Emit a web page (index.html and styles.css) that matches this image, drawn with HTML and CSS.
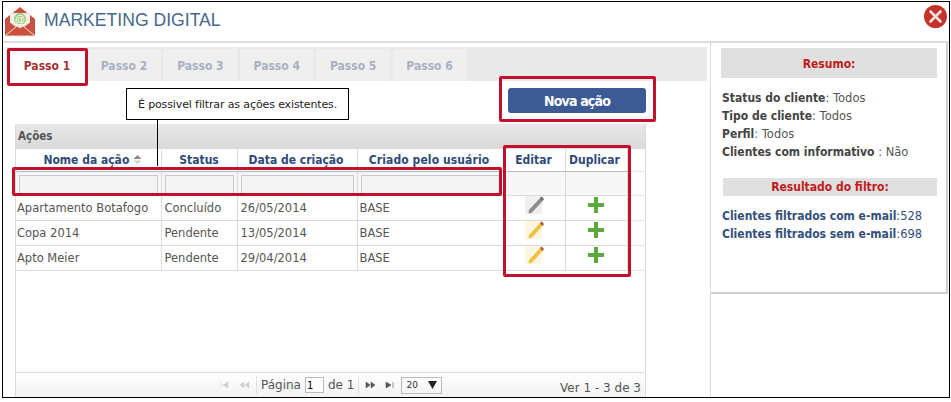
FILE: index.html
```html
<!DOCTYPE html>
<html lang="pt">
<head>
<meta charset="utf-8">
<title>Marketing Digital</title>
<link rel="stylesheet" href="styles.css">
</head>
<body>
<div class="modal">
  <header class="head">
    <svg class="logo" width="32" height="31" viewBox="0 0 32 31">
      <path d="M1 13 16 1l15 12v17H1z" fill="#c9513f"/>
      <path d="M6 17V7h20v10l-10 7z" fill="#f4efe4"/>
      <path d="M1 13 16 24l15-11v3L16 26 1 16z" fill="#c9513f"/>
      <path d="M1 30 13 20l3 2 3-2 12 10z" fill="#c9513f" stroke="#f2ddd6" stroke-width="1"/>
      <circle cx="16" cy="13" r="6" fill="#9ccc7a"/>
      <text x="16" y="16.5" class="logo-at">@</text>
    </svg>
    <h1 class="title">MARKETING DIGITAL</h1>
    <button class="close" aria-label="Fechar">
      <svg width="23" height="23" viewBox="0 0 23 23"><circle cx="11.5" cy="11.5" r="11.5" fill="#c5322b"/><path d="M6.5 6.500l10 10M16.500 6.500l-10 10" stroke="#f6e3e0" stroke-width="2.600" stroke-linecap="round"/></svg>
    </button>
  </header>
  <div class="body">
    <main class="main">
      <nav class="tabs">
        <a class="tab tab-on">Passo 1</a>
        <a class="tab">Passo 2</a>
        <a class="tab">Passo 3</a>
        <a class="tab">Passo 4</a>
        <a class="tab">Passo 5</a>
        <a class="tab">Passo 6</a>
      </nav>
      <div class="tools"><button class="new">Nova ação</button></div>
      <section class="grid">
        <div class="caption">Ações</div>
        <table class="tbl">
          <colgroup><col class="c1"><col class="c2"><col class="c3"><col class="c4"><col class="c5"><col class="c6"><col></colgroup>
          <thead>
            <tr class="hr">
              <th>Nome da ação <svg class="sort" width="9" height="9" viewBox="0 0 9 9"><path d="M4.500 0 8.500 4H.5z" fill="#8a8a8a"/><path d="M4.500 9 8.500 5.500H.5z" fill="#cfcfcf"/></svg></th>
              <th>Status</th><th>Data de criação</th><th>Criado pelo usuário</th><th>Editar</th><th>Duplicar</th><th class="blank"></th>
            </tr>
            <tr class="fr">
              <td><input class="f"></td><td><input class="f"></td><td><input class="f"></td><td><input class="f"></td><td></td><td></td><td class="blank"></td>
            </tr>
          </thead>
          <tbody>
            <tr><td>Apartamento Botafogo</td><td>Concluído</td><td>26/05/2014</td><td>BASE</td>
              <td class="ic"><svg width="22" height="22" viewBox="0 0 22 22"><rect x="1" y="2" width="17" height="18" fill="#efefef"/><path d="M5 16l11-12 3 2.500L8 18.500l-3.500 1z" fill="#8d8d8d"/><path d="M16 4l1.500-1.500 2.500 2.500L18.500 7z" fill="#666"/></svg></td>
              <td class="ic"><svg width="18" height="18" viewBox="0 0 18 18"><path d="M7 1h4v6h6v4h-6v6H7v-6H1V7h6z" fill="#5fa83c"/></svg></td><td class="blank"></td></tr>
            <tr><td>Copa 2014</td><td>Pendente</td><td>13/05/2014</td><td>BASE</td>
              <td class="ic"><svg width="22" height="22" viewBox="0 0 22 22"><rect x="1" y="2" width="17" height="18" fill="#fbf5e2"/><path d="M5 16l11-12 3 2.500L8 18.500l-3.500 1z" fill="#ecc23f"/><path d="M16 4l1.500-1.500 2.500 2.500L18.500 7z" fill="#b5493a"/></svg></td>
              <td class="ic"><svg width="18" height="18" viewBox="0 0 18 18"><path d="M7 1h4v6h6v4h-6v6H7v-6H1V7h6z" fill="#5fa83c"/></svg></td><td class="blank"></td></tr>
            <tr><td>Apto Meier</td><td>Pendente</td><td>29/04/2014</td><td>BASE</td>
              <td class="ic"><svg width="22" height="22" viewBox="0 0 22 22"><rect x="1" y="2" width="17" height="18" fill="#fbf5e2"/><path d="M5 16l11-12 3 2.500L8 18.500l-3.500 1z" fill="#ecc23f"/><path d="M16 4l1.500-1.500 2.500 2.500L18.500 7z" fill="#b5493a"/></svg></td>
              <td class="ic"><svg width="18" height="18" viewBox="0 0 18 18"><path d="M7 1h4v6h6v4h-6v6H7v-6H1V7h6z" fill="#5fa83c"/></svg></td><td class="blank"></td></tr>
          </tbody>
        </table>
        <div class="pager">
          <div class="pg-mid">
            <svg class="pgi" width="32" height="8" viewBox="0 0 32 8"><path d="M1 1v6M3 4l5-3v6zM20 4l4-3v6zM25 4l4-3v6z" fill="#cfcfcf" stroke="#cfcfcf" stroke-width=".6"/></svg>
            <span class="pg-sep"></span>
            <span>Página</span><input class="pg-in" value="1"><span>de 1</span>
            <span class="pg-sep"></span>
            <svg class="pgi pgi2" width="32" height="8" viewBox="0 0 32 8"><path d="M1 1l4 3-4 3zM6 1l4 3-4 3zM21 1l5 3-5 3zM28 1v6" fill="#555" stroke="#555" stroke-width=".6"/></svg>
            <span class="pg-sel">20<svg width="9" height="8" viewBox="0 0 9 8"><path d="M0 0h9L4.500 8z" fill="#222"/></svg></span>
          </div>
          <div class="pg-info">Ver 1 - 3 de 3</div>
        </div>
      </section>
    </main>
    <aside class="side">
      <div class="box">
        <h2 class="sh">Resumo:</h2>
        <ul class="sl">
          <li><b>Status do cliente</b>: Todos</li>
          <li><b>Tipo de cliente</b>: Todos</li>
          <li><b>Perfil</b>: Todos</li>
          <li><b>Clientes com informativo</b> : Não</li>
        </ul>
        <h2 class="sh sh2">Resultado do filtro:</h2>
        <ul class="sl sl2">
          <li><b>Clientes filtrados com e-mail</b>:528</li>
          <li><b>Clientes filtrados sem e-mail</b>:698</li>
        </ul>
      </div>
    </aside>
  </div>
  <div class="tip">É possivel filtrar as ações existentes.</div>
  <div class="tip-line"></div>
  <div class="mark m-tab"></div>
  <div class="mark m-new"></div>
  <div class="mark m-filter"></div>
  <div class="mark m-act"></div>
</div>
</body>
</html>
```
FILE: styles.css
```css
* { box-sizing: border-box; }
html, body { margin: 0; height: 100%; background: #fff; }
body { padding: 1px 1px 4px 2px; font-family: "DejaVu Sans", sans-serif; font-size: 11.5px; color: #555; overflow: hidden; }
.modal { position: relative; height: 397px; border: 1px solid #000; display: flex; flex-direction: column; background: #fff; }
.head { height: 41px; flex: none; display: flex; align-items: center; padding: 0 0 0 1px; border-bottom: 2px solid #dcdcdc; }
.logo { display: block; }
.logo-at { font: bold 10px "Liberation Sans", sans-serif; text-anchor: middle; fill: #fff; }
.title { margin: 0 0 2px 8px; font: 400 17.6px "Liberation Sans", sans-serif; color: #46688a; flex: 1; }
.close { border: 0; padding: 0; background: none; margin: -11px 2px 0 0; width: 23px; height: 23px; }
.close svg { display: block; }
.body { flex: 1; display: flex; min-height: 0; }
.main { width: 707px; flex: none; padding: 4px 0 0 3px; display: flex; flex-direction: column; }
.tabs { height: 34px; background: #e9e9e9; margin-right: 3px; display: flex; gap: 2.4px; padding: 2px 0 0 1px; flex: none; }
.tab { width: 74px; height: 32px; padding-top: 2px; background: #efefef; font: bold 12px "DejaVu Sans Condensed", "DejaVu Sans", sans-serif; color: #a8b1c2; display: flex; align-items: center; justify-content: center; }
.tab-on { width: 80px; background: #fff; color: #a83232; margin-right: -2.4px; }
.tools { height: 43px; flex: none; display: flex; justify-content: flex-end; padding: 7px 64px 0 0; }
.new { width: 138px; height: 25px; border: 0; border-radius: 3px; background: #3c5a94; color: #fff; font: bold 14px "DejaVu Sans Condensed", "DejaVu Sans", sans-serif; letter-spacing: -.8px; }
.grid { margin-left: 9px; width: 631px; flex: 1; display: flex; flex-direction: column; border: solid #dcdcdc; border-width: 0 1px; }
.caption { height: 25px; flex: none; background: linear-gradient(#e8e8e8, #d9d9d9); font: bold 11.5px "DejaVu Sans Condensed", "DejaVu Sans", sans-serif; color: #555; padding: 5px 0 0 2px; }
.tbl { width: 629px; table-layout: fixed; border-collapse: collapse; flex: none; }
.c1 { width: 145px; } .c2 { width: 76px; } .c3 { width: 120px; } .c4 { width: 148px; } .c5 { width: 60px; } .c6 { width: 62px; }
.tbl td, .tbl th { border: solid #dcdcdc; border-width: 0 1px 1px 0; padding: 0; overflow: hidden; white-space: nowrap; }
.hr th { height: 22px; padding-top: 1px; font: bold 12px "DejaVu Sans Condensed", "DejaVu Sans", sans-serif; color: #2f4a78; text-align: center; border-bottom-color: #bbb; }
.hr th:first-child { padding-left: 9px; }
.hr th:nth-child(3) { padding-right: 2px; }
.hr th:nth-child(4) { padding-right: 4px; letter-spacing: .1px; }
.hr th:nth-child(5), .hr th:nth-child(6) { padding-right: 3px; }
.fr td { height: 24px; background: #f7f7f7; padding: 2px 3px 0; }
.f { display: block; width: 100%; height: 19px; border: 1px solid #c8c8c8; background: #f4f4f4; padding: 0; }
tbody td { height: 25px; padding-left: 3px !important; font-size: 11.5px; color: #555; }
tbody td:first-child { padding-left: 1px !important; }
tbody td:nth-child(4) { padding-left: 2px !important; }
td.ic { text-align: center; padding: 0 !important; }
.ic svg { display: block; margin: -5px auto 0; }
.tbl .blank { border-right: 0; background: #fff; border-bottom-color: #e6e6e6; }
.pager { margin-top: auto; height: 25px; flex: none; border-top: 1px solid #dcdcdc; background: linear-gradient(#fff, #f2f2f2); display: flex; align-items: center; font-size: 12px; color: #555; }
.pg-mid { margin-left: 204px; display: flex; align-items: center; gap: 4px; }
.pgi { display: block; }
.pgi2 { margin-left: 2px; }
.pg-sep { width: 1px; height: 18px; background: #e0e0e0; }
.pg-in { width: 19px; height: 16px; border: 1px solid #bbb; padding: 0 0 0 1px; font: 10px "DejaVu Sans", sans-serif; }
.pg-sel { width: 41px; height: 17px; border: 1px solid #bbb; display: flex; align-items: center; justify-content: space-between; font-size: 9px; padding: 0 4px; color: #333; }
.pg-info { margin-left: auto; padding-right: 4px; padding-top: 5px; }
.side { flex: 1; border-left: 1px solid #dcdcdc; }
.box { height: 251px; border: solid #cfcfcf; border-width: 0 2px 2px 0; padding: 5px 9px 0 10px; margin-right: 1px; }
.sh { margin: 0; height: 30px; padding-top: 2px; background: #e0e0e0; font: bold 12px "DejaVu Sans Condensed", "DejaVu Sans", sans-serif; color: #c01c1c; display: flex; align-items: center; justify-content: center; }
.sl { list-style: none; margin: 11px 0 0 1px; padding: 0; color: #555; font-size: 11.5px; }
.sl li { height: 18px; line-height: 18px; white-space: nowrap; }
.sl b { color: #444; font: bold 12px/1 "DejaVu Sans Condensed", "DejaVu Sans", sans-serif; }
.sh2 { height: 18px; margin: 17px 0 0 2px; padding-top: 0; }
.sl2 { margin-top: 11px; color: #34507c; }
.sl2 b { color: #34507c; }
.tip { position: absolute; left: 123px; top: 86px; width: 223px; height: 32px; border: 1px solid #000; background: #fff; color: #222; font-size: 11px; letter-spacing: -.12px; display: flex; align-items: center; justify-content: center; }
.tip-line { position: absolute; left: 154px; top: 118px; width: 1px; height: 46px; background: #000; }
.mark { position: absolute; border: 3px solid #c4112b; border-radius: 2px; }
.m-tab { left: 4px; top: 46px; width: 81px; height: 38px; }
.m-new { left: 496px; top: 74px; width: 157px; height: 46px; }
.m-filter { left: 9px; top: 165px; width: 490px; height: 29px; }
.m-act { left: 500px; top: 143px; width: 128px; height: 132px; }
```
